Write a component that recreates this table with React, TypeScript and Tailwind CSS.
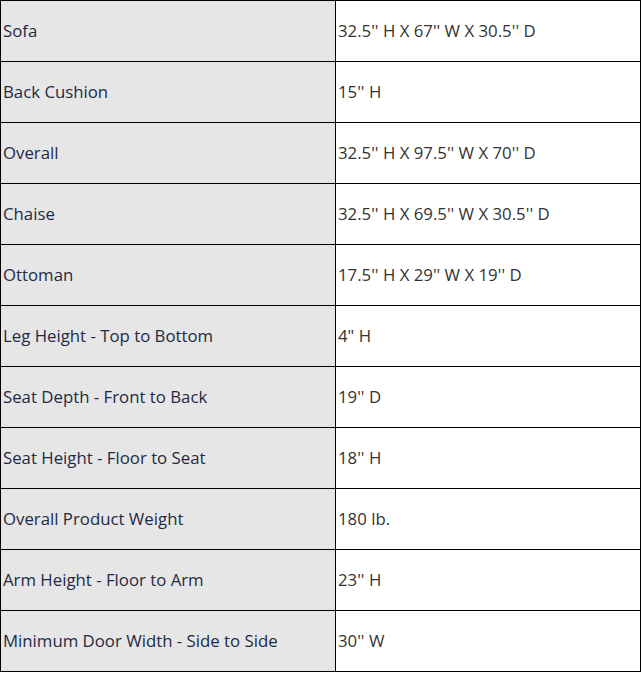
const rows: [string, string][] = [
  ['Sofa', '32.5\'\' H X 67\'\' W X 30.5\'\' D'],
  ['Back Cushion', '15\'\' H'],
  ['Overall', '32.5\'\' H X 97.5\'\' W X 70\'\' D'],
  ['Chaise', '32.5\'\' H X 69.5\'\' W X 30.5\'\' D'],
  ['Ottoman', '17.5\'\' H X 29\'\' W X 19\'\' D'],
  ['Leg Height - Top to Bottom', '4" H'],
  ['Seat Depth - Front to Back', '19\'\' D'],
  ['Seat Height - Floor to Seat', '18\'\' H'],
  ['Overall Product Weight', '180 lb.'],
  ['Arm Height - Floor to Arm', '23\'\' H'],
  ['Minimum Door Width - Side to Side', '30\'\' W'],
];

export default function App() {
  return (
    <div className="bg-white">
      <table className="w-[641px] border-collapse font-['Open_Sans',sans-serif] text-[16.8px]">
        <tbody>
          {rows.map(([label, value]) => (
            <tr key={label} className="h-[61px]">
              <td className="w-[335px] border border-black bg-[#e6e6e6] px-[2px] text-[#1f2a44]">{label}</td>
              <td className="border border-black bg-white px-[2px] text-[#333]">{value}</td>
            </tr>
          ))}
        </tbody>
      </table>
    </div>
  );
}
